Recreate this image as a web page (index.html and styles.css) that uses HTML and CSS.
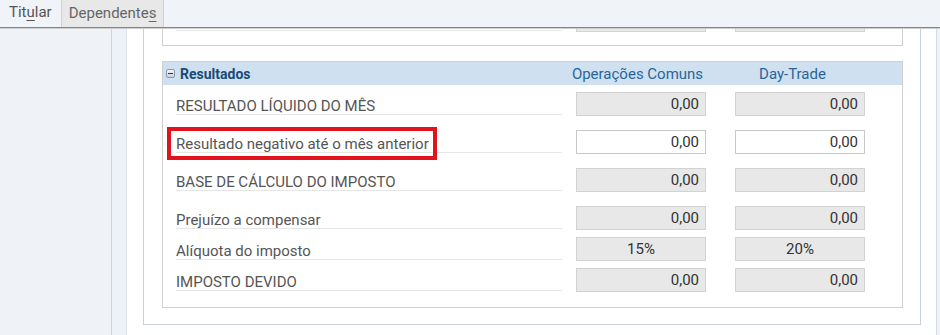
FILE: index.html
```html
<!DOCTYPE html>
<html lang="pt-BR">
<head>
    <meta charset="UTF-8">
    <title>Resultados</title>
    <link rel="stylesheet" href="styles.css">
</head>
<body>
    <div class="tabs">
        <div class="tab">Tit<u>u</u>lar</div>
        <div class="tab inactive">Dependente<u>s</u></div>
    </div>

    <div class="main">
        <div class="sidebar"></div>
        <div class="strip"></div>
        <div class="content">
            <div class="outer">
                <!-- bloco anterior, rolado para cima -->
                <div class="box top-box">
                    <div class="row stub">
                        <div class="label"></div>
                        <div class="field ro"></div>
                        <div class="field ro"></div>
                    </div>
                </div>

                <div class="box results">
                    <div class="box-head">
                        <div class="head-title"><span class="toggle"></span>Resultados</div>
                        <div class="head-col">Operações Comuns</div>
                        <div class="head-col shift">Day-Trade</div>
                    </div>

                    <div class="row">
                        <div class="label">RESULTADO LÍQUIDO DO MÊS</div>
                        <div class="field ro">0,00</div>
                        <div class="field ro">0,00</div>
                    </div>
                    <div class="row wide">
                        <div class="label">Resultado negativo até o mês anterior<span class="mark"></span></div>
                        <div class="field">0,00</div>
                        <div class="field">0,00</div>
                    </div>
                    <div class="row wide">
                        <div class="label">BASE DE CÁLCULO DO IMPOSTO</div>
                        <div class="field ro">0,00</div>
                        <div class="field ro">0,00</div>
                    </div>
                    <div class="row wide">
                        <div class="label">Prejuízo a compensar</div>
                        <div class="field ro">0,00</div>
                        <div class="field ro">0,00</div>
                    </div>
                    <div class="row">
                        <div class="label">Alíquota do imposto</div>
                        <div class="field ro center">15%</div>
                        <div class="field ro center">20%</div>
                    </div>
                    <div class="row">
                        <div class="label">IMPOSTO DEVIDO</div>
                        <div class="field ro">0,00</div>
                        <div class="field ro">0,00</div>
                    </div>
                </div>
            </div>
        </div>
        <div class="edge"></div>
    </div>
</body>
</html>
```

FILE: styles.css
```css
body {
    margin: 0;
    font-family: Roboto, 'Liberation Sans', sans-serif;
    font-size: 15px;
    color: #555;
    background: #fff;
}
.tabs {
    display: flex;
    height: 27px;
    background: #f0f3f8;
    border-bottom: 1px solid #858585;
    box-shadow: 0 1px 0 #cfcfcf;
    position: relative;
}
.tab {
    padding: 0 8px 0 9px;
    line-height: 25px;
    color: #555;
}
.tab u {
    text-underline-offset: 3px;
}
.tab.inactive {
    margin-left: 1px;
    padding: 1px 7px 0 7px;
    background: #e8e8e8;
    border-left: 1px solid #d2d2d2;
    border-right: 1px solid #d2d2d2;
    color: #666;
}
.main {
    display: flex;
    height: 306px;
    margin-top: 1px;
}
.sidebar {
    width: 111px;
    background: #eff3f8;
    border-right: 1px solid #cfd3d8;
}
.strip {
    width: 14px;
    background: #eef2f8;
    border-right: 1px solid #dbe2ec;
}
.content {
    flex: 1;
    background: #fff;
}
.edge {
    width: 3px;
    background: #eef2f8;
    border-left: 1px solid #d3dbe6;
}
.outer {
    margin: 0 15px 0 16px;
    padding: 0 17px 16px 18px;
    border: 1px solid #c9d0da;
    border-top: none;
}
.box {
    border: 1px solid #d0d0d0;
    padding: 0 37px 15px 13px;
}
.top-box {
    border-top: none;
    height: 3px;
    padding-bottom: 13px;
    margin-bottom: 15px;
}
.box-head {
    display: flex;
    align-items: center;
    height: 23px;
    margin: 0 -37px 0 -13px;
    padding-left: 3px;
    background: #cfe1f1;
}
.head-title {
    width: 410px;
    font-weight: bold;
    font-size: 14px;
    color: #1b4a75;
    display: flex;
    align-items: center;
}
.toggle {
    display: inline-block;
    width: 9px;
    height: 9px;
    margin-right: 5px;
    box-sizing: border-box;
    border: 1px solid #8a9aaa;
    border-radius: 2px;
    background: linear-gradient(#f4f6f8, #c8d2dc);
    position: relative;
}
.toggle::after {
    content: '';
    position: absolute;
    left: 1px;
    right: 1px;
    top: 3px;
    height: 1px;
    background: #333;
}
.head-col {
    width: 130px;
    box-sizing: border-box;
    padding-right: 7px;
    display: flex;
    justify-content: center;
    white-space: nowrap;
    color: #2a6598;
}
.head-col.shift {
    margin-left: 29px;
    padding-right: 15px;
}
.row {
    display: flex;
    align-items: flex-end;
    margin-top: 7px;
}
.row.wide {
    margin-top: 14px;
}
.row.stub {
    margin-top: 0;
    height: 3px;
}
.label {
    width: 386px;
    margin: 0 14px 1px 0;
    line-height: 16px;
    border-bottom: 1px solid #e6e6e6;
    position: relative;
}
.row.stub .label {
    line-height: 0;
    height: 1px;
}
.field {
    width: 130px;
    height: 24px;
    box-sizing: border-box;
    border: 1px solid #c8c8c8;
    background: #fff;
    padding-right: 6px;
    text-align: right;
    line-height: 22px;
    color: #333;
}
.field + .field {
    margin-left: 29px;
}
.field.ro {
    background: #e8e8e8;
    border-color: #d2d2d2;
}
.field.center {
    text-align: center;
    padding: 0;
}
.row.stub .field {
    height: 4px;
    border-top: none;
}
.mark {
    position: absolute;
    left: -9px;
    top: -9px;
    width: 270px;
    height: 33px;
    box-sizing: border-box;
    border: 4px solid #e2131d;
}
```
